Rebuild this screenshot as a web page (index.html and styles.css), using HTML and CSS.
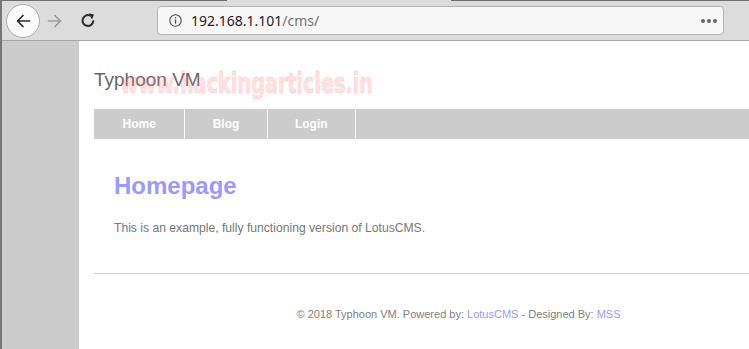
FILE: index.html
```html
<!DOCTYPE html>
<html>
<head>
<meta charset="utf-8">
<title>Typhoon VM</title>
<link rel="stylesheet" href="styles.css">
</head>
<body>
<div class="window">
  <div class="topline"><span class="seg seg-a"></span><span class="seg seg-b"></span><span class="seg seg-c"></span></div>
  <div class="toolbar">
    <div class="back">
      <svg width="16" height="16" viewBox="0 0 16 16"><path d="M14.5 8H2.5M8 2.5L2.5 8 8 13.5" fill="none" stroke="#2b2b2b" stroke-width="1.7" stroke-linecap="round" stroke-linejoin="round"/></svg>
    </div>
    <div class="fwd">
      <svg width="16" height="16" viewBox="0 0 16 16"><path d="M1.5 8H13.5M8 2.5L13.5 8 8 13.5" fill="none" stroke="#9a9a9a" stroke-width="1.7" stroke-linecap="round" stroke-linejoin="round"/></svg>
    </div>
    <div class="reload">
      <svg width="16" height="16" viewBox="0 0 16 16"><path d="M13.3 9.2A5.4 5.4 0 1 1 9.6 3.4" fill="none" stroke="#2b2b2b" stroke-width="2" stroke-linecap="round"/><path d="M8.6 1.2L14 2.4 12 7.4Z" fill="#2b2b2b"/></svg>
    </div>
    <div class="urlbar">
      <svg class="info" width="13" height="13" viewBox="0 0 13 13"><circle cx="6.5" cy="6.5" r="5.7" fill="none" stroke="#4a4a4a" stroke-width="1.1"/><rect x="5.9" y="5.5" width="1.3" height="4.2" fill="#4a4a4a"/><rect x="5.9" y="3.2" width="1.3" height="1.3" fill="#4a4a4a"/></svg>
      <span class="host">192.168.1.101</span><span class="path">/cms/</span>
      <span class="dots"><i></i><i></i><i></i></span>
    </div>
  </div>
  <div class="viewport">
    <div class="side"></div>
    <div class="page">
      <div class="wrap">
        <div class="header">
          <h1 class="site-title">Typhoon VM</h1>
          <div class="watermark">www.hackingarticles.in</div>
        </div>
        <ul class="nav">
          <li class="nav-home"><a href="#">Home</a></li>
          <li><a href="#">Blog</a></li>
          <li><a href="#">Login</a></li>
        </ul>
        <div class="content">
          <h2 class="page-title">Homepage</h2>
          <p class="intro">This is an example, fully functioning version of LotusCMS.</p>
        </div>
        <hr class="rule">
        <div class="footer">© 2018 Typhoon VM. Powered by: <a href="#">LotusCMS</a> - Designed By: <a href="#">MSS</a></div>
      </div>
    </div>
  </div>
</div>
</body>
</html>
```
FILE: styles.css
```css
html, body {
  margin: 0;
  padding: 0;
  width: 749px;
  height: 349px;
  overflow: hidden;
  background: #ffffff;
}
.window {
  width: 749px;
  height: 349px;
  border-left: 2px solid #767676;
  box-sizing: border-box;
  display: flex;
  flex-direction: column;
  overflow: hidden;
}
.topline {
  display: flex;
  height: 1px;
  flex: none;
}
.seg { display: block; height: 1px; }
.seg-a { width: 225px; background: #6e6e6e; }
.seg-b { width: 224px; background: #dcdcdc; }
.seg-c { flex: 1; background: #6e6e6e; }
.toolbar {
  flex: none;
  height: 39px;
  background: #dcdcdc;
  border-bottom: 1px solid #a7a7a7;
  display: flex;
  align-items: center;
}
.back {
  margin-left: 4px;
  width: 32px;
  height: 32px;
  border-radius: 50%;
  border: 1px solid #adadad;
  background: #fafafa;
  display: flex;
  align-items: center;
  justify-content: center;
}
.back svg, .fwd svg, .reload svg { display: block; }
.fwd { margin-left: 7px; display: flex; }
.reload { margin-left: 17px; display: flex; margin-top: -1px; }
.urlbar {
  margin-left: 61px;
  width: 567px;
  height: 29px;
  box-sizing: border-box;
  background: #f7f7f7;
  border: 1px solid #b3b3b3;
  border-radius: 4px;
  display: flex;
  align-items: center;
  padding-left: 11px;
  padding-right: 6px;
  font-family: "Noto Sans", "Open Sans", sans-serif;
  font-size: 14px;
}
.info { display: block; flex: none; }
.host { margin-left: 9px; color: #1d1d1d; }
.path { color: #737373; }
.dots {
  margin-left: auto;
  display: flex;
  gap: 2px;
}
.dots i {
  display: block;
  width: 4px;
  height: 4px;
  border-radius: 50%;
  background: #636363;
}
.viewport {
  flex: 1;
  display: flex;
  min-height: 0;
}
.side {
  width: 77px;
  flex: none;
  background: #cccccc;
}
.page {
  flex: 1;
  background: #ffffff;
  overflow: hidden;
  font-family: "Liberation Sans", Arial, sans-serif;
}
.wrap {
  margin-left: 15px;
  width: 729px;
}
.header {
  position: relative;
  padding-top: 28px;
}
.site-title {
  margin: 0;
  font-size: 19px;
  line-height: 22px;
  font-weight: normal;
  color: #666666;
}
.watermark {
  position: absolute;
  left: 26px;
  top: 27px;
  font-family: "DejaVu Sans Condensed", "DejaVu Sans", sans-serif;
  font-weight: bold;
  font-size: 28px;
  letter-spacing: -0.4px;
  line-height: 32px;
  color: rgba(255, 120, 120, 0.22);
  -webkit-text-stroke: 1.2px rgba(255, 150, 150, 0.22);
  white-space: nowrap;
  transform: scaleX(0.785);
  transform-origin: 0 50%;
  pointer-events: none;
}
.nav {
  list-style: none;
  margin: 18px 0 0 0;
  padding: 0;
  display: flex;
  height: 30px;
  background: #cccccc;
}
.nav li {
  border-right: 1px solid #ffffff;
  display: flex;
  align-items: center;
}
.nav a {
  padding: 0 27.3px;
  color: #ffffff;
  font-weight: bold;
  font-size: 12px;
  text-decoration: none;
}
.nav .nav-home a {
  padding: 0 28.5px;
}
.content {
  padding: 33px 0 0 20px;
}
.page-title {
  margin: 0;
  font-size: 24px;
  line-height: 28px;
  font-weight: bold;
  color: #9999ff;
}
.intro {
  margin: 21px 0 0 0;
  font-size: 12.15px;
  line-height: 15px;
  color: #777777;
}
.rule {
  margin: 37px 0 0 0;
  border: 0;
  height: 1px;
  background: #cccccc;
}
.footer {
  margin-top: 33px;
  text-align: center;
  font-size: 11px;
  line-height: 15px;
  color: #808080;
}
.footer a {
  color: #9999ff;
  text-decoration: none;
}
```
